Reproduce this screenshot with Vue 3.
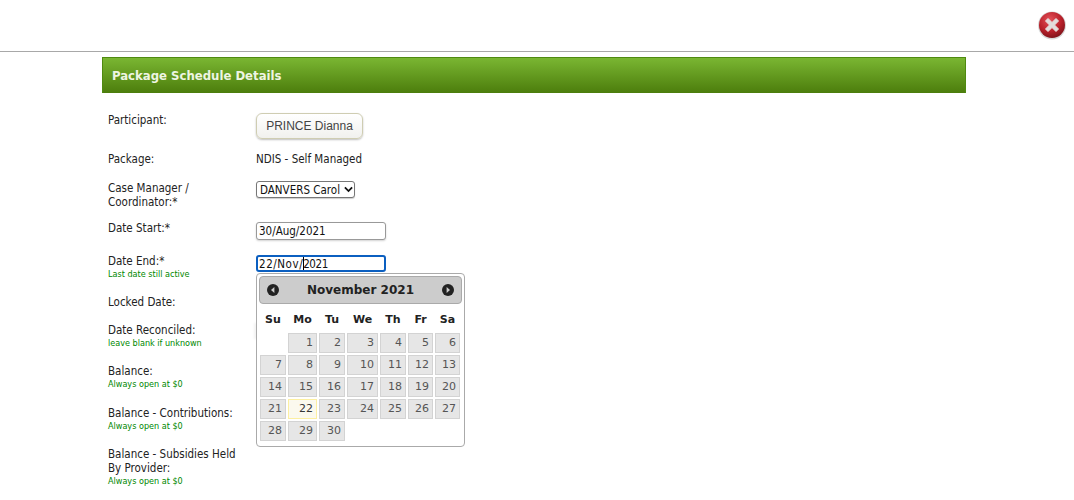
<script setup>
const rows = [
  { label: 'Participant:', kind: 'button' },
  { label: 'Package:', kind: 'text' },
  { label: 'Case Manager / Coordinator:*', kind: 'select' },
  { label: 'Date Start:*', kind: 'start' },
  { label: 'Date End:*', note: 'Last date still active', kind: 'end' },
  { label: 'Locked Date:' },
  { label: 'Date Reconciled:', note: 'leave blank if unknown', kind: 'ghost' },
  { label: 'Balance:', note: 'Always open at $0' },
  { label: 'Balance - Contributions:', note: 'Always open at $0' },
  { label: 'Balance - Subsidies Held By Provider:', note: 'Always open at $0' }
]
const weekdays = ['Su', 'Mo', 'Tu', 'We', 'Th', 'Fr', 'Sa']
const days = [null]
for (let d = 1; d <= 30; d++) days.push(d)
</script>

<template>
  <div class="page">
    <header class="top">
      <svg class="close" width="30" height="30" viewBox="0 0 30 30">
        <defs>
          <radialGradient id="redBall" cx="0.42" cy="0.3" r="0.8">
            <stop offset="0" stop-color="#e4525a" />
            <stop offset="0.55" stop-color="#b9202a" />
            <stop offset="1" stop-color="#6e0f16" />
          </radialGradient>
        </defs>
        <circle cx="15" cy="15.5" r="14" fill="#d8d8d8" />
        <circle cx="15" cy="15" r="13" fill="url(#redBall)" />
        <path d="M8.5 11 L11 8.5 L15 12.5 L19 8.5 L21.5 11 L17.5 15 L21.5 19 L19 21.5 L15 17.5 L11 21.5 L8.5 19 L12.5 15 Z" fill="#e2dcdc" stroke="#e8e2e2" stroke-width="1" stroke-linejoin="round" />
      </svg>
    </header>

    <main class="content">
      <h1 class="bar">Package Schedule Details</h1>
      <div class="form">
        <div
          v-for="row in rows"
          :key="row.label"
          class="row"
          :class="{ raised: row.kind === 'end' || row.kind === 'start' }"
        >
          <div class="label">
            {{ row.label }}
            <div v-if="row.note" class="note">{{ row.note }}</div>
          </div>
          <div class="value">
            <button v-if="row.kind === 'button'" class="person" type="button">PRINCE Dianna</button>
            <span v-else-if="row.kind === 'text'" class="plain">NDIS - Self Managed</span>
            <div v-else-if="row.kind === 'select'" class="select">
              <span>DANVERS Carol</span>
              <svg width="9" height="7" viewBox="0 0 10 7"><path d="M1 1.2 L5 5.2 L9 1.2" fill="none" stroke="#111" stroke-width="2" /></svg>
            </div>
            <div v-else-if="row.kind === 'start'" class="date">30/Aug/2021</div>
            <div v-else-if="row.kind === 'end'" class="date-wrap">
              <div class="date focus"><span class="typed">22/Nov/</span><i class="caret"></i><span class="rest">2021</span></div>
              <div class="calendar">
                <div class="cal-head">
                  <svg class="nav" width="12" height="12" viewBox="0 0 12 12"><circle cx="6" cy="6" r="6" fill="#222" /><path d="M7.4 3 L4 6 L7.4 9 Z" fill="#ccc" /></svg>
                  <span class="month">November 2021</span>
                  <svg class="nav" width="12" height="12" viewBox="0 0 12 12"><circle cx="6" cy="6" r="6" fill="#222" /><path d="M4.6 3 L8 6 L4.6 9 Z" fill="#ccc" /></svg>
                </div>
                <div class="weekdays">
                  <span v-for="w in weekdays" :key="w">{{ w }}</span>
                </div>
                <div class="days">
                  <template v-for="(d, i) in days" :key="i">
                    <span v-if="d === null"></span>
                    <span v-else class="day" :class="{ today: d === 22 }">{{ d }}</span>
                  </template>
                </div>
              </div>
            </div>
            <div v-else-if="row.kind === 'ghost'" class="ghost"></div>
          </div>
        </div>
      </div>
    </main>
  </div>
</template>

<style>
html, body { margin: 0; background: #fff; overflow: hidden; }
</style>

<style scoped>
.page {
  width: 1074px;
  height: 500px;
  overflow: hidden;
  font-family: "DejaVu Sans Condensed", "DejaVu Sans", sans-serif;
  font-size: 11.5px;
  line-height: 14px;
  color: #222;
}
.top {
  border-bottom: 1px solid #a8a8a8;
  display: flex;
  justify-content: flex-end;
  align-items: flex-start;
  padding: 10px 7px 0 0;
  box-sizing: border-box;
  height: 52px;
}
.close { display: block; }
.content { margin: 5px 0 0 102px; width: 864px; }
.bar {
  margin: 0;
  height: 36px;
  box-sizing: border-box;
  padding-left: 9px;
  border: 1px solid #4f8a10;
  border-width: 1px 1px 0;
  background: linear-gradient(#7ab632, #4c7d0c);
  color: #eef5e2;
  font-size: 13px;
  font-weight: bold;
  line-height: 35px;
}
.form {
  display: grid;
  grid-template-rows: 39px 29px 41px 33px 40px 28px 41px 42px 41px auto;
  padding-top: 19px;
}
.row {
  display: grid;
  grid-template-columns: 148px 1fr;
  padding-left: 6px;
  align-items: start;
}
.label { width: 134px; padding-top: 1px; }
.note { font-size: 9px; line-height: 11px; color: #080; margin-top: 1px; }
.raised .label { padding-top: 0; }
.value { position: relative; }
.plain { display: block; padding-top: 1px; }
.person {
  display: block;
  margin-top: 1px;
  width: 107px;
  height: 26px;
  padding: 0;
  box-sizing: border-box;
  font: 12px "Liberation Sans", sans-serif;
  color: #444;
  background: linear-gradient(#fff, #f1f1ee);
  border: 1px solid #cfcdb2;
  border-radius: 6px;
  box-shadow: 0 1px 2px rgba(0, 0, 0, 0.25);
}
.select {
  width: 99px;
  height: 17px;
  margin-top: 1px;
  box-sizing: border-box;
  display: flex;
  align-items: center;
  justify-content: space-between;
  padding: 0 1px 0 3px;
  border: 1px solid #777;
  border-radius: 3px;
  background: #fff;
  color: #111;
  white-space: nowrap;
  box-shadow: 0 1px 1px rgba(0, 0, 0, 0.2);
}
.date {
  width: 130px;
  height: 18px;
  margin-top: 1px;
  box-sizing: border-box;
  padding-left: 2px;
  border: 1px solid #999;
  border-radius: 3px;
  line-height: 16px;
  background: #fff;
  color: #111;
  box-shadow: 0 1px 2px rgba(0, 0, 0, 0.18);
}
.date.focus {
  border: 2px solid #0b5fc0;
  padding-left: 1px;
  line-height: 14px;
  height: 17px;
  box-shadow: none;
}
.typed { letter-spacing: 0.55px; }
.rest { letter-spacing: -0.4px; }
.caret {
  display: inline-block;
  width: 1px;
  height: 13px;
  margin: 0 -1px 0 0;
  background: #000;
  vertical-align: -2px;
}
.ghost {
  width: 4px;
  height: 16px;
  margin: 1px 0 0 -2px;
  background: rgba(0, 0, 0, 0.05);
  filter: blur(1px);
}
.calendar {
  position: absolute;
  left: 0;
  top: 19px;
  z-index: 2;
  width: 209px;
  height: 174px;
  box-sizing: border-box;
  padding: 2px;
  background: #fff;
  border: 1px solid #aaa;
  border-radius: 4px;
  font-family: "DejaVu Sans", sans-serif;
  color: #222;
}
.cal-head {
  height: 28px;
  box-sizing: border-box;
  display: flex;
  align-items: center;
  justify-content: space-between;
  padding: 0 7px;
  background: #ccc;
  border: 1px solid #aaa;
  border-radius: 4px;
}
.nav { display: block; }
.month { font-size: 12px; font-weight: bold; line-height: 26px; }
.weekdays, .days {
  display: grid;
  grid-template-columns: 26px 29px 26px 31px 26px 25px 25px;
  column-gap: 2px;
  padding-left: 1px;
}
.weekdays {
  height: 25px;
  margin-top: 1px;
  align-items: end;
  font-weight: bold;
  font-size: 11px;
  line-height: 20px;
  text-align: center;
}
.days { grid-auto-rows: 20px; row-gap: 2px; padding-top: 3px; }
.day {
  box-sizing: border-box;
  padding-right: 3px;
  text-align: right;
  font-size: 11px;
  line-height: 18px;
  color: #555;
  background: #e6e6e6;
  border: 1px solid #d3d3d3;
}
.day.today { background: #fbf9ee; border-color: #fcefa1; color: #363636; }
</style>
